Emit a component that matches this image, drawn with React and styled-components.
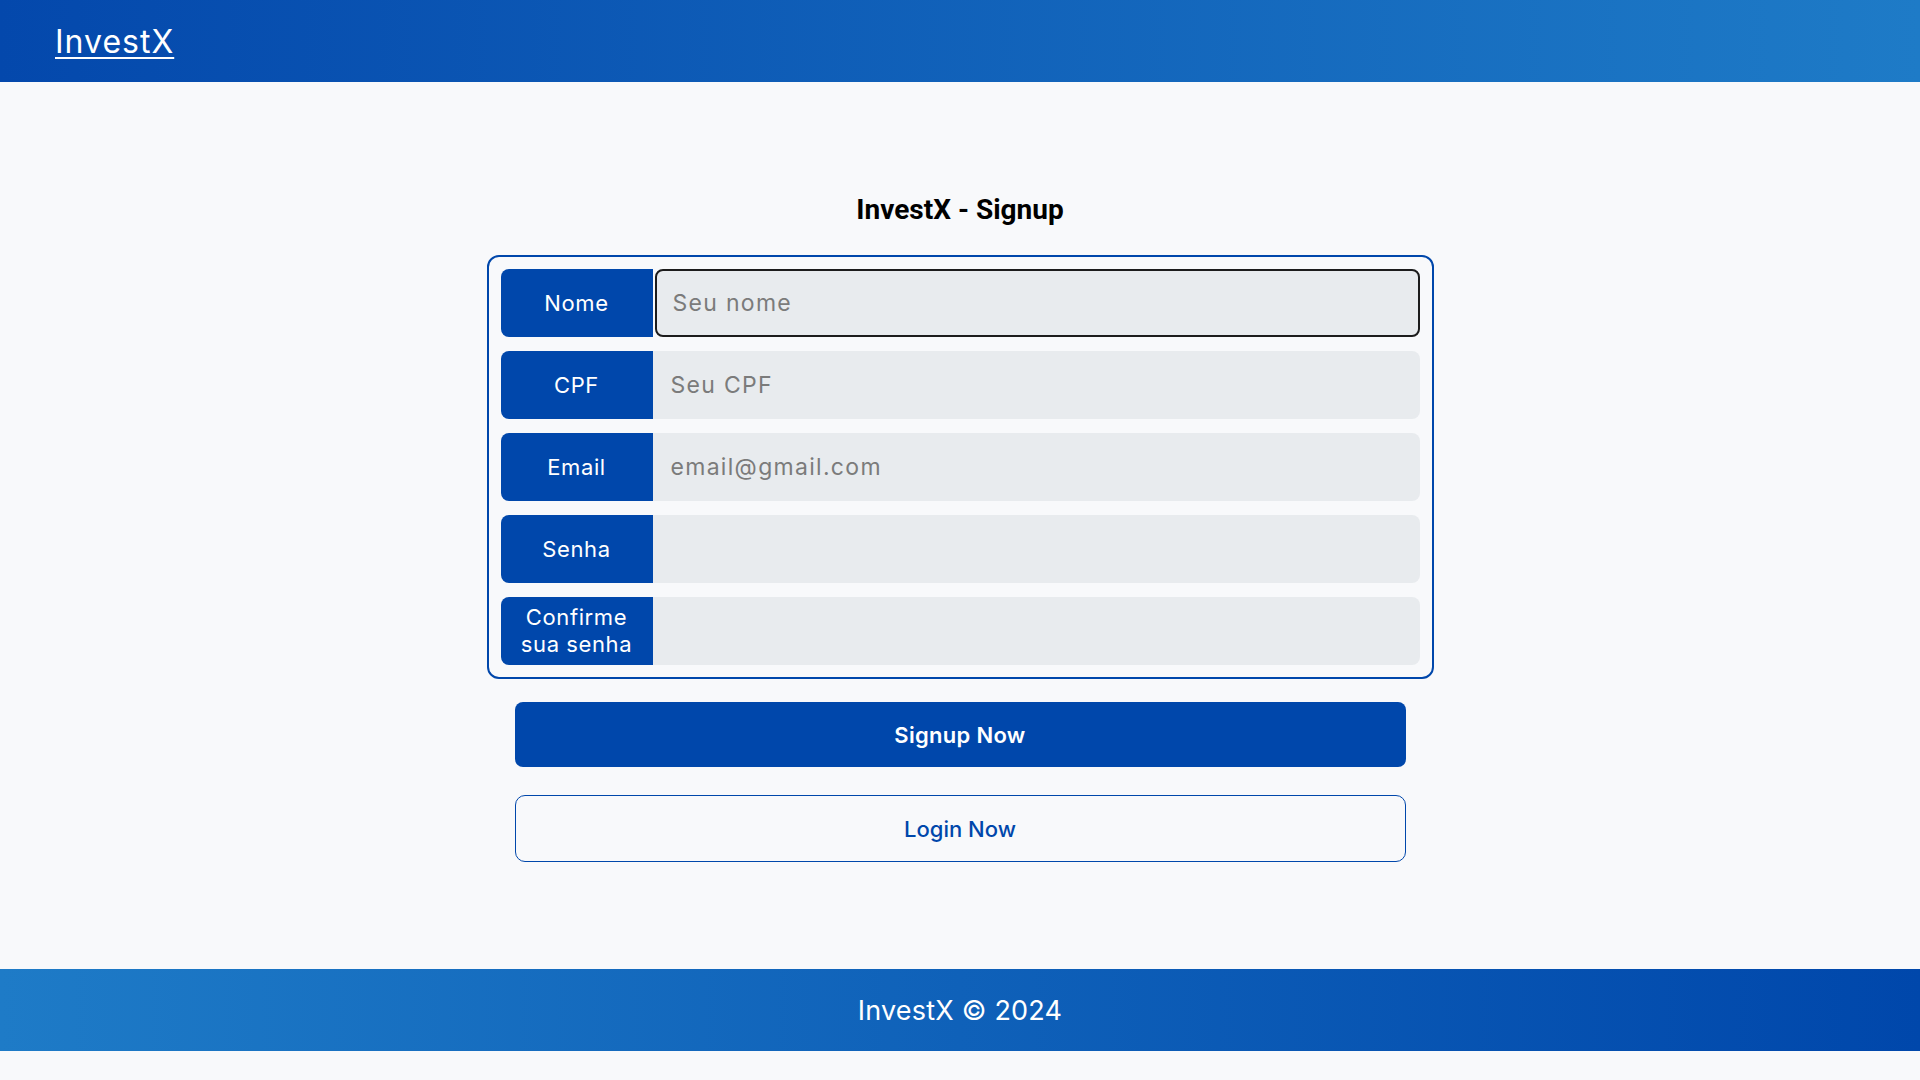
import styled, { createGlobalStyle } from 'styled-components';

const GlobalStyle = createGlobalStyle`
  * {
    box-sizing: border-box;
  }

  body {
    margin: 0;
    background: #f8f9fb;
    font-family: 'Inter', 'Open Sans', sans-serif;
  }
`;

const Page = styled.div`
  display: flex;
  flex-direction: column;
  min-height: 100vh;
  background: #f8f9fb;
`;

const Header = styled.header`
  height: 82px;
  display: flex;
  align-items: center;
  padding: 0 55px;
  background: linear-gradient(90deg, #0448ac 0%, #1e7bc7 100%);
`;

const Logo = styled.a`
  color: #fff;
  font-size: 32px;
  font-weight: 400;
  letter-spacing: 1px;
  text-decoration: underline;
  text-underline-offset: 4px;
  text-decoration-thickness: 2px;
  cursor: pointer;
`;

const Main = styled.main`
  height: 887px;
  display: flex;
  flex-direction: column;
  align-items: center;
  padding-top: 111px;
`;

const Title = styled.h1`
  margin: 0 0 28px;
  font-family: 'Roboto', 'Liberation Sans', sans-serif;
  font-weight: 700;
  font-size: 28px;
  line-height: 34px;
  color: #000;
`;

const Form = styled.form`
  display: flex;
  flex-direction: column;
  align-items: center;
`;

const FieldBox = styled.div`
  width: 947px;
  display: flex;
  flex-direction: column;
  gap: 14px;
  padding: 12px;
  border: 2px solid #0047ab;
  border-radius: 12px;
`;

const Row = styled.div`
  display: flex;
  height: 68px;
`;

const Label = styled.label`
  width: 152px;
  flex-shrink: 0;
  display: flex;
  align-items: center;
  justify-content: center;
  text-align: center;
  padding: 0 8px;
  background: #0047ab;
  color: #fff;
  font-size: 22px;
  letter-spacing: 0.6px;
  line-height: 27px;
  border-radius: 8px 0 0 8px;
`;

const Input = styled.input`
  flex: 1;
  min-width: 0;
  height: 100%;
  padding: 0 16px;
  border: 2px solid ${({ $focused }) => ($focused ? '#1c1c1c' : 'transparent')};
  border-radius: ${({ $focused }) => ($focused ? '8px' : '0 8px 8px 0')};
  margin-left: ${({ $focused }) => ($focused ? '2px' : '0')};
  background: #e8ebee;
  font-family: inherit;
  font-size: 23px;
  letter-spacing: 1.3px;
  color: #222;
  outline: none;

  &::placeholder {
    color: #7b7b7b;
  }
`;

const PrimaryButton = styled.button`
  width: 891px;
  height: 65px;
  margin-top: 23px;
  border: none;
  border-radius: 8px;
  background: #0047ab;
  color: #fff;
  font-family: inherit;
  font-size: 22px;
  font-weight: 600;
  letter-spacing: 0.3px;
  cursor: pointer;
`;

const OutlineButton = styled.button`
  width: 891px;
  height: 67px;
  margin-top: 28px;
  border: 1.5px solid #0047ab;
  border-radius: 10px;
  background: transparent;
  color: #0047ab;
  font-family: inherit;
  font-size: 22px;
  font-weight: 500;
  cursor: pointer;
`;

const Footer = styled.footer`
  height: 82px;
  display: flex;
  align-items: center;
  justify-content: center;
  background: linear-gradient(90deg, #1e7bc7 0%, #0047ab 100%);
  color: #fff;
  font-size: 27px;
  letter-spacing: 0.2px;
`;

const fields = [
  { id: 'nome', label: 'Nome', placeholder: 'Seu nome', type: 'text' },
  { id: 'cpf', label: 'CPF', placeholder: 'Seu CPF', type: 'text' },
  { id: 'email', label: 'Email', placeholder: 'email@gmail.com', type: 'email' },
  { id: 'senha', label: 'Senha', placeholder: '', type: 'password' },
  { id: 'confirme', label: 'Confirme sua senha', placeholder: '', type: 'password' }
];

export default function App() {
  return (
    <Page>
      <GlobalStyle />
      <Header>
        <Logo>InvestX</Logo>
      </Header>

      <Main>
        <Title>InvestX - Signup</Title>
        <Form onSubmit={e => e.preventDefault()}>
          <FieldBox>
            {fields.map((field, index) => (
              <Row key={field.id}>
                <Label htmlFor={field.id}>{field.label}</Label>
                <Input
                  id={field.id}
                  type={field.type}
                  placeholder={field.placeholder}
                  $focused={index === 0}
                  autoFocus={index === 0}
                />
              </Row>
            ))}
          </FieldBox>
          <PrimaryButton type="submit">Signup Now</PrimaryButton>
          <OutlineButton type="button">Login Now</OutlineButton>
        </Form>
      </Main>

      <Footer>InvestX © 2024</Footer>
    </Page>
  );
}
